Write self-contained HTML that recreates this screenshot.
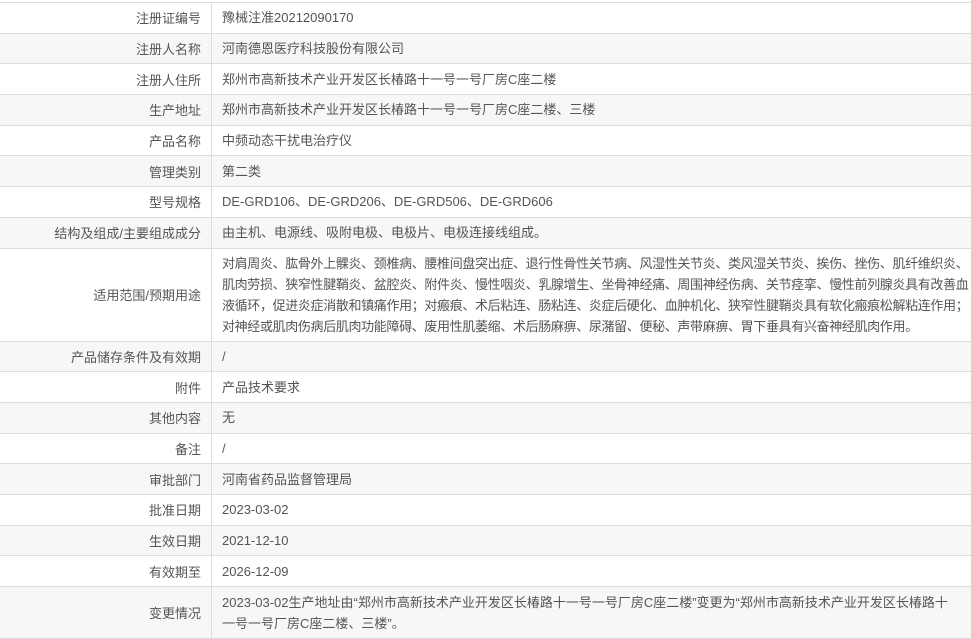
<!DOCTYPE html>
<html><head><meta charset="utf-8"><style>
html,body{margin:0;padding:0;background:#fff;}
body{width:971px;height:633px;overflow:hidden;font-family:"Liberation Sans","Noto Sans CJK SC",sans-serif;font-size:13px;color:#555;}
.t{position:absolute;left:0;top:2px;width:971px;border-top:1px solid #ddd;}
.r{display:flex;border-bottom:1px solid #ddd;box-sizing:border-box;overflow:hidden;}
.r:nth-child(even){background:#f7f7f7;}
.l{flex:none;width:212px;border-right:1px solid #ddd;box-sizing:border-box;text-align:right;padding-right:10px;display:flex;align-items:center;justify-content:flex-end;white-space:nowrap;}
.v{flex:none;padding-left:10px;display:flex;align-items:center;white-space:nowrap;line-height:21px;}
</style></head><body>
<div class="t">
<div class="r" style="height:30.7px"><div class="l">注册证编号</div><div class="v">豫械注准20212090170</div></div>
<div class="r" style="height:30.7px"><div class="l">注册人名称</div><div class="v">河南德恩医疗科技股份有限公司</div></div>
<div class="r" style="height:30.7px"><div class="l">注册人住所</div><div class="v">郑州市高新技术产业开发区长椿路十一号一号厂房C座二楼</div></div>
<div class="r" style="height:30.7px"><div class="l">生产地址</div><div class="v">郑州市高新技术产业开发区长椿路十一号一号厂房C座二楼、三楼</div></div>
<div class="r" style="height:30.7px"><div class="l">产品名称</div><div class="v">中频动态干扰电治疗仪</div></div>
<div class="r" style="height:30.7px"><div class="l">管理类别</div><div class="v">第二类</div></div>
<div class="r" style="height:30.7px"><div class="l">型号规格</div><div class="v">DE-GRD106、DE-GRD206、DE-GRD506、DE-GRD606</div></div>
<div class="r" style="height:30.7px"><div class="l">结构及组成/主要组成成分</div><div class="v">由主机、电源线、吸附电极、电极片、电极连接线组成。</div></div>
<div class="r" style="height:93px"><div class="l">适用范围/预期用途</div><div class="v" style="letter-spacing:-0.35px">对肩周炎、肱骨外上髁炎、颈椎病、腰椎间盘突出症、退行性骨性关节病、风湿性关节炎、类风湿关节炎、挨伤、挫伤、肌纤维织炎、<br>肌肉劳损、狭窄性腱鞘炎、盆腔炎、附件炎、慢性咽炎、乳腺增生、坐骨神经痛、周围神经伤病、关节痉挛、慢性前列腺炎具有改善血<br>液循环，促进炎症消散和镇痛作用；对瘢痕、术后粘连、肠粘连、炎症后硬化、血肿机化、狭窄性腱鞘炎具有软化瘢痕松解粘连作用；<br>对神经或肌肉伤病后肌肉功能障碍、废用性肌萎缩、术后肠麻痹、尿潴留、便秘、声带麻痹、胃下垂具有兴奋神经肌肉作用。</div></div>
<div class="r" style="height:30.7px"><div class="l">产品储存条件及有效期</div><div class="v">/</div></div>
<div class="r" style="height:30.7px"><div class="l">附件</div><div class="v">产品技术要求</div></div>
<div class="r" style="height:30.7px"><div class="l">其他内容</div><div class="v">无</div></div>
<div class="r" style="height:30.7px"><div class="l">备注</div><div class="v">/</div></div>
<div class="r" style="height:30.7px"><div class="l">审批部门</div><div class="v">河南省药品监督管理局</div></div>
<div class="r" style="height:30.7px"><div class="l">批准日期</div><div class="v">2023-03-02</div></div>
<div class="r" style="height:30.7px"><div class="l">生效日期</div><div class="v">2021-12-10</div></div>
<div class="r" style="height:30.7px"><div class="l">有效期至</div><div class="v">2026-12-09</div></div>
<div class="r" style="height:52px"><div class="l">变更情况</div><div class="v">2023-03-02生产地址由“郑州市高新技术产业开发区长椿路十一号一号厂房C座二楼”变更为“郑州市高新技术产业开发区长椿路十<br>一号一号厂房C座二楼、三楼”。</div></div>
</div>
</body></html>
